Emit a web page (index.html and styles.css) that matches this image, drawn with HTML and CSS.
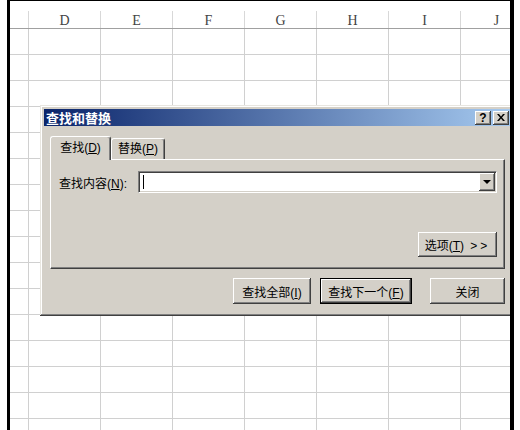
FILE: index.html
```html
<!DOCTYPE html>
<html lang="zh-CN">
<head>
    <meta charset="UTF-8">
    <title>查找和替换</title>
    <link rel="stylesheet" href="styles.css">
</head>
<body>

    <div class="sheet">
        <div class="formula-gap"></div>
        <div class="col-head">
            <div class="corner"></div>
            <div class="col">D</div>
            <div class="col">E</div>
            <div class="col">F</div>
            <div class="col">G</div>
            <div class="col">H</div>
            <div class="col">I</div>
            <div class="col">J</div>
        </div>
        <div class="cells"></div>

        <!-- dialogo encima de la hoja -->
        <div class="dialog">
            <div class="title-bar">
                <span class="title-text">查找和替换</span>
                <span class="tbtn help">?</span>
                <span class="tbtn">
                    <svg width="8" height="7" viewBox="0 0 8 7"><path d="M0 0h2l2 2.5L6 0h2L5 3.5 8 7H6L4 4.5 2 7H0l3-3.5z" fill="#000"/></svg>
                </span>
            </div>

            <div class="dlg-body">
                <div class="tabs">
                    <div class="tab active">查找(<u>D</u>)</div>
                    <div class="tab">替换(<u>P</u>)</div>
                </div>

                <div class="panel">
                    <div class="find-row">
                        <label class="find-label">查找内容(<u>N</u>):</label>
                        <div class="combo">
                            <span class="caret"></span>
                            <span class="drop-btn"><span class="arrow"></span></span>
                        </div>
                    </div>
                    <button class="btn options-btn">选项(<u>T</u>) <span class="more">&gt;&gt;</span></button>
                </div>

                <div class="actions">
                    <button class="btn btn-all">查找全部(<u>I</u>)</button>
                    <button class="btn btn-next default">查找下一个(<u>F</u>)</button>
                    <button class="btn btn-close">关闭</button>
                </div>
            </div>
        </div>
    </div>

</body>
</html>
```

FILE: styles.css
```css
body {
    margin: 0;
    background-color: #fff;
    font-family: "Liberation Sans", "Noto Sans CJK SC", sans-serif;
}

.sheet {
    position: relative;
    width: 500px;
    height: 429px;
    margin-left: 7px;
    border-left: 3px solid #000;
    border-right: 4px solid #000;
    border-top: 1px solid #000;
    overflow: hidden;
    background-color: #fff;
}

.formula-gap {
    height: 10px;
}

.col-head {
    display: flex;
    height: 17px;
    border-bottom: 1px solid #a0a0a0;
}

.corner {
    flex: 0 0 19px;
    box-sizing: border-box;
    border-right: 1px solid #d8d8d8;
}

.col {
    flex: 0 0 72px;
    box-sizing: border-box;
    border-right: 1px solid #d8d8d8;
    text-align: center;
    font-family: "Liberation Serif", serif;
    font-size: 14px;
    line-height: 19px;
    color: #444;
}

.cells {
    height: 401px;
    background-image:
        linear-gradient(to bottom, transparent 25px, #d0d0d0 25px),
        linear-gradient(to right, transparent 71px, #d0d0d0 71px);
    background-size: 100% 26px, 72px 100%;
    background-position: 0 0, 19px 0;
}

/* ventana de dialogo */
.dialog {
    position: absolute;
    left: 30px;
    top: 104px;
    width: 475px;
    height: 211px;
    box-sizing: border-box;
    padding: 4px;
    background-color: #d4d0c8;
    box-shadow: inset -1px -1px #404040, inset 1px 1px #e8e6e0, inset -2px -2px #808080, inset 2px 2px #fff;
    font-size: 12px;
    color: #000;
}

.title-bar {
    display: flex;
    align-items: center;
    height: 17px;
    padding: 0 2px;
    background: linear-gradient(to right, #0a246a, #a6caf0);
}

.title-text {
    flex: 1;
    color: #fff;
    font-family: "Noto Sans CJK SC", sans-serif;
    font-weight: bold;
    font-size: 13px;
    line-height: 17px;
}

.tbtn {
    display: flex;
    align-items: center;
    justify-content: center;
    width: 16px;
    height: 14px;
    margin-left: 2px;
    background-color: #d4d0c8;
    box-shadow: inset -1px -1px #404040, inset 1px 1px #fff, inset -2px -2px #808080;
}

.help {
    font-family: "Liberation Sans", sans-serif;
    font-weight: bold;
    font-size: 12px;
    line-height: 14px;
}

.dlg-body {
    padding: 10px 6px 0 6px;
}

.tabs {
    display: flex;
    align-items: flex-end;
    height: 24px;
    margin-bottom: -1px;
}

.tab {
    box-sizing: border-box;
    height: 21px;
    width: 54px;
    margin-bottom: 1px;
    border-top: 1px solid #fff;
    border-left: 1px solid #fff;
    border-right: 1px solid #404040;
    border-radius: 3px 3px 0 0;
    box-shadow: inset -1px 0 #808080;
    background-color: #d4d0c8;
    text-align: center;
    line-height: 20px;
}

.tab.active {
    width: 61px;
    height: 24px;
    margin-bottom: 0;
    line-height: 22px;
}

.panel {
    display: flex;
    flex-direction: column;
    box-sizing: border-box;
    height: 110px;
    padding: 11px 7px 0 7px;
    border: 1px solid;
    border-color: #fff #404040 #404040 #fff;
    box-shadow: inset -1px -1px #808080;
}

.find-row {
    display: flex;
    align-items: center;
    height: 22px;
}

.find-label {
    width: 79px;
    padding-left: 1px;
}

.combo {
    flex: 1;
    display: flex;
    align-items: center;
    justify-content: space-between;
    box-sizing: border-box;
    height: 22px;
    border: 1px solid;
    border-color: #808080 #fff #fff #808080;
    box-shadow: inset 1px 1px #404040, inset -1px -1px #d4d0c8;
    background-color: #fff;
    padding: 1px;
}

.caret {
    width: 1px;
    height: 14px;
    margin-left: 3px;
    background-color: #000;
}

.drop-btn {
    display: flex;
    align-items: center;
    justify-content: center;
    width: 16px;
    height: 18px;
    background-color: #d4d0c8;
    box-shadow: inset -1px -1px #404040, inset 1px 1px #fff, inset -2px -2px #808080;
}

.arrow {
    width: 0;
    height: 0;
    border-left: 4px solid transparent;
    border-right: 4px solid transparent;
    border-top: 4px solid #000;
}

.btn {
    box-sizing: border-box;
    height: 26px;
    padding: 0;
    border: none;
    background-color: #d4d0c8;
    box-shadow: inset -1px -1px #404040, inset 1px 1px #fff, inset -2px -2px #808080;
    font-family: "Liberation Sans", "Noto Sans CJK SC", sans-serif;
    font-size: 12px;
    color: #000;
}

.options-btn {
    align-self: flex-end;
    width: 79px;
    height: 25px;
    margin-top: 39px;
}

.more {
    letter-spacing: 3px;
    margin-left: 3px;
}

.actions {
    display: flex;
    justify-content: flex-end;
    margin-top: 9px;
}

.btn-all {
    width: 78px;
}

.btn-next {
    width: 92px;
    margin-left: 9px;
}

.btn-close {
    width: 75px;
    margin-left: 18px;
}

.btn.default {
    border: 1px solid #000;
}
```
